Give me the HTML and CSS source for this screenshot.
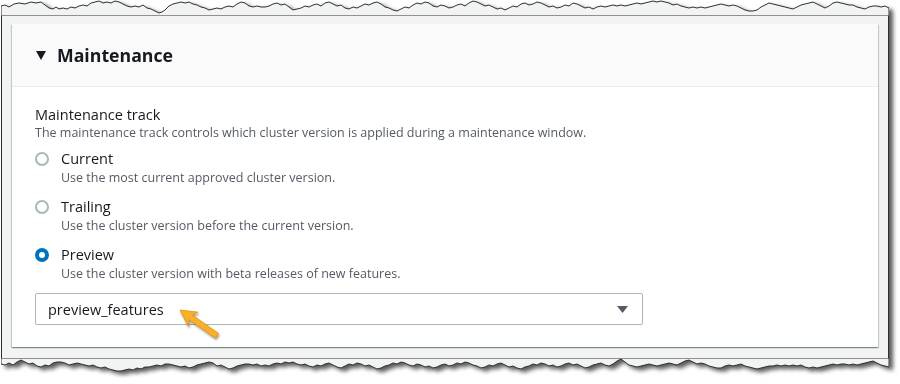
FILE: index.html
```html
<!DOCTYPE html>
<html lang="en">
<head>
  <meta charset="UTF-8" />
  <meta name="viewport" content="width=device-width, initial-scale=1.0"/>
  <title>Maintenance</title>
  <link rel="stylesheet" href="styles.css">
</head>
<body>

<div class="sheet">
  <svg class="edge edge-top" viewBox="0 0 888 16" preserveAspectRatio="none">
    <path class="edge-fill" d="M0,16 L0,6 L4,5 L8,7 L13,4 L18,3 L24,4 L30,2 L35,3 L40,2 L44,5 L48,8 L52,9 L55,7 L58,9 L62,8 L66,9 L70,7 L74,8 L78,6 L82,5 L86,6 L90,3 L94,2 L98,1 L102,3 L106,2 L110,3 L114,1 L118,2 L122,4 L126,6 L130,7 L134,6 L138,7 L142,5 L146,8 L150,9 L154,11 L158,13 L161,12 L164,10 L168,6 L172,4 L176,3 L180,2 L184,3 L188,2 L192,4 L196,5 L200,7 L204,8 L208,10 L212,9 L216,8 L220,9 L224,7 L228,6 L232,7 L236,4 L240,2 L244,3 L248,6 L252,7 L256,6 L260,7 L264,7 L268,6 L272,4 L276,3 L280,5 L284,4 L288,7 L292,10 L296,9 L300,8 L304,6 L308,7 L312,5 L316,4 L320,6 L324,3 L328,2 L332,4 L336,6 L340,5 L344,8 L348,9 L352,7 L356,8 L360,6 L364,4 L368,5 L372,3 L376,2 L380,4 L384,7 L388,8 L392,10 L396,11 L400,9 L404,7 L408,8 L412,5 L416,3 L420,4 L424,2 L428,3 L432,6 L436,7 L440,5 L444,6 L448,8 L452,7 L456,5 L460,4 L464,6 L468,3 L472,1 L476,2 L480,4 L484,6 L488,5 L492,7 L496,9 L500,8 L504,10 L508,8 L512,6 L516,7 L520,4 L524,3 L528,5 L532,4 L536,2 L540,3 L544,5 L548,7 L552,6 L556,8 L560,7 L564,5 L568,6 L572,3 L576,4 L580,6 L584,8 L588,7 L592,9 L596,7 L600,6 L604,7 L608,6 L612,5 L616,6 L620,5 L624,6 L628,5 L632,4 L636,3 L640,4 L644,3 L648,2 L652,1 L656,2 L660,1 L664,2 L668,3 L672,5 L676,4 L680,6 L684,7 L688,8 L692,7 L696,8 L700,7 L704,8 L708,7 L712,6 L716,5 L720,4 L724,5 L728,6 L732,5 L736,6 L740,8 L744,10 L748,11 L752,11 L756,10 L760,7 L764,5 L768,3 L772,4 L776,5 L780,6 L784,7 L788,8 L792,9 L796,7 L800,5 L804,4 L808,3 L812,2 L816,4 L820,6 L824,8 L828,6 L832,3 L836,2 L840,3 L844,4 L848,5 L852,5 L856,7 L860,8 L864,9 L868,7 L872,6 L876,6 L880,7 L884,6 L888,8 L888,16 Z"/>
  </svg>

  <div class="sheet-body">
    <section class="panel">
      <header class="panel-header">
        <svg class="caret" width="10" height="9" viewBox="0 0 10 9"><path d="M0,0 H10 L5,9 Z"/></svg>
        <h2>Maintenance</h2>
      </header>

      <div class="panel-content">
        <div class="field-head">
          <div class="field-label">Maintenance track</div>
          <div class="field-desc">The maintenance track controls which cluster version is applied during a maintenance window.</div>
        </div>

        <div class="radio-group">
          <label class="radio">
            <span class="radio-dot"></span>
            <span class="radio-title">Current</span>
            <span class="radio-desc">Use the most current approved cluster version.</span>
          </label>
          <label class="radio">
            <span class="radio-dot"></span>
            <span class="radio-title">Trailing</span>
            <span class="radio-desc">Use the cluster version before the current version.</span>
          </label>
          <label class="radio checked">
            <span class="radio-dot"></span>
            <span class="radio-title">Preview</span>
            <span class="radio-desc">Use the cluster version with beta releases of new features.</span>
          </label>
        </div>

        <div class="select">
          <span>preview_features</span>
          <svg width="11" height="7" viewBox="0 0 11 7"><path d="M0,0 H11 L5.5,7 Z"/></svg>
        </div>
      </div>
    </section>
  </div>

  <svg class="edge edge-bottom" viewBox="0 0 888 20" preserveAspectRatio="none">
    <path class="edge-fill" d="M0,0 L888,0 L888,9 L884,8 L880,7 L876,5 L872,3 L868,4 L864,5 L860,6 L856,7 L852,6 L848,7 L844,6 L840,6 L836,7 L832,6 L828,7 L824,8 L820,9 L816,10 L812,9 L808,10 L804,9 L800,7 L796,8 L792,7 L788,8 L784,7 L780,8 L776,7 L772,8 L768,8 L764,9 L760,10 L756,11 L752,10 L748,9 L744,8 L740,6 L736,7 L732,8 L728,7 L724,8 L720,10 L716,10 L712,9 L708,8 L704,6 L700,5 L696,6 L692,4 L688,2 L684,3 L680,5 L676,7 L672,6 L668,5 L664,6 L660,7 L656,8 L652,7 L648,6 L644,7 L640,8 L636,9 L632,8 L628,7 L624,4 L620,1 L616,3 L612,6 L608,8 L604,7 L600,5 L596,6 L592,7 L588,9 L584,10 L580,8 L576,6 L572,7 L568,5 L564,6 L560,8 L556,9 L552,7 L548,8 L544,6 L540,5 L536,7 L532,6 L528,8 L524,9 L520,11 L516,10 L512,8 L508,9 L504,7 L500,5 L496,6 L492,8 L488,7 L484,9 L480,10 L476,8 L472,7 L468,5 L464,4 L460,6 L456,5 L452,7 L448,8 L444,6 L440,7 L436,9 L432,10 L428,8 L424,9 L420,7 L416,6 L412,8 L408,7 L404,5 L400,4 L396,6 L392,5 L388,7 L384,8 L380,10 L376,11 L372,9 L368,7 L364,8 L360,6 L356,5 L352,7 L348,6 L344,8 L340,10 L336,9 L332,7 L328,5 L324,6 L320,8 L316,7 L312,9 L308,8 L304,6 L300,7 L296,6 L292,4 L288,5 L284,4 L280,6 L276,5 L272,6 L268,8 L264,7 L260,8 L256,6 L252,7 L248,6 L244,6 L240,7 L236,8 L232,10 L228,11 L224,9 L220,7 L216,8 L212,5 L208,4 L204,5 L200,6 L196,7 L192,9 L188,10 L184,8 L180,9 L176,8 L172,7 L168,6 L164,6 L160,8 L156,7 L152,8 L148,9 L144,9 L140,11 L136,10 L132,12 L128,11 L124,12 L120,13 L116,13 L112,12 L108,11 L104,9 L100,10 L96,9 L92,7 L88,8 L84,7 L80,6 L76,5 L72,6 L68,7 L64,5 L60,4 L56,4 L52,5 L48,8 L44,7 L40,9 L36,8 L32,5 L28,6 L24,4 L20,2 L16,4 L12,7 L8,5 L4,7 L0,6 Z"/>
  </svg>

  <!-- callout arrow pointing at the selected value -->
  <svg class="callout" width="60" height="48" viewBox="0 0 60 48">
    <path transform="translate(10,11) rotate(34.8)" d="M0,0 L16,-8.5 L13,-2.8 L45,-2.8 L45,2.8 L13,2.8 L16,8.5 Z"/>
  </svg>
</div>

</body>
</html>
```

FILE: styles.css
```css
body {
  margin: 0;
  padding: 0;
  background: #fff;
  font-family: "Open Sans", "Liberation Sans", sans-serif;
  color: #16191f;
}

/* torn paper sheet */
.sheet {
  position: relative;
  width: 888px;
  margin-left: 1px;
  filter: drop-shadow(4px 3px 2px rgba(0, 0, 0, 0.65));
}

.edge {
  display: block;
  width: 888px;
}

.edge-top {
  height: 16px;
}

.edge-bottom {
  height: 20px;
}

.edge-fill {
  fill: #f2f3f3;
  stroke: #2f2f2f;
  stroke-width: 1;
  vector-effect: non-scaling-stroke;
}

.sheet-body {
  background: #f2f3f3;
  border-left: 1px solid #2f2f2f;
  border-right: 1px solid #2f2f2f;
  padding: 8px 10px 11px 10px;
}

/* container panel */
.panel {
  background: #fff;
  box-shadow: 0 1px 1px 0 rgba(0, 28, 36, 0.3), 1px 1px 1px 0 rgba(0, 28, 36, 0.15), -1px 1px 1px 0 rgba(0, 28, 36, 0.15);
}

.panel-header {
  display: flex;
  align-items: center;
  gap: 11px;
  height: 62px;
  padding-left: 24px;
  background: #fafafa;
  border-bottom: 1px solid #eaeded;
}

.caret path {
  fill: #16191f;
}

.panel-header h2 {
  margin: 0;
  font-size: 17.7px;
  font-weight: 700;
  line-height: 22px;
}

.panel-content {
  display: flex;
  flex-direction: column;
  padding: 18px 23px 22px 23px;
}

.field-label {
  font-size: 14.5px;
  line-height: 20px;
}

.field-desc {
  font-size: 12.5px;
  line-height: 16px;
  color: #545b64;
}

.radio-group {
  display: flex;
  flex-direction: column;
  gap: 11px;
  margin-top: 8px;
}

.radio {
  display: grid;
  grid-template-columns: 14px 1fr;
  column-gap: 12px;
  align-items: center;
}

.radio-dot {
  box-sizing: border-box;
  width: 14px;
  height: 14px;
  border: 2px solid #aab7b8;
  border-radius: 50%;
  background: #fff;
}

.radio.checked .radio-dot {
  border: 4.5px solid #0073bb;
}

.radio-title {
  font-size: 14.5px;
  line-height: 20px;
}

.radio-desc {
  grid-column: 2;
  font-size: 12.5px;
  line-height: 17px;
  color: #545b64;
}

.select {
  box-sizing: border-box;
  display: flex;
  align-items: center;
  justify-content: space-between;
  width: 608px;
  height: 32px;
  margin-top: 11px;
  padding: 0 14px 0 12px;
  border: 1px solid #aab7b8;
  border-radius: 2px;
  font-size: 14.5px;
}

.select path {
  fill: #545b64;
}

.callout {
  position: absolute;
  left: 169px;
  top: 299px;
  overflow: visible;
  filter: drop-shadow(1.5px 2px 1px rgba(0, 0, 0, 0.35));
}

.callout path {
  fill: #f7b027;
  stroke: #e8940c;
  stroke-width: 0.8;
}
```
